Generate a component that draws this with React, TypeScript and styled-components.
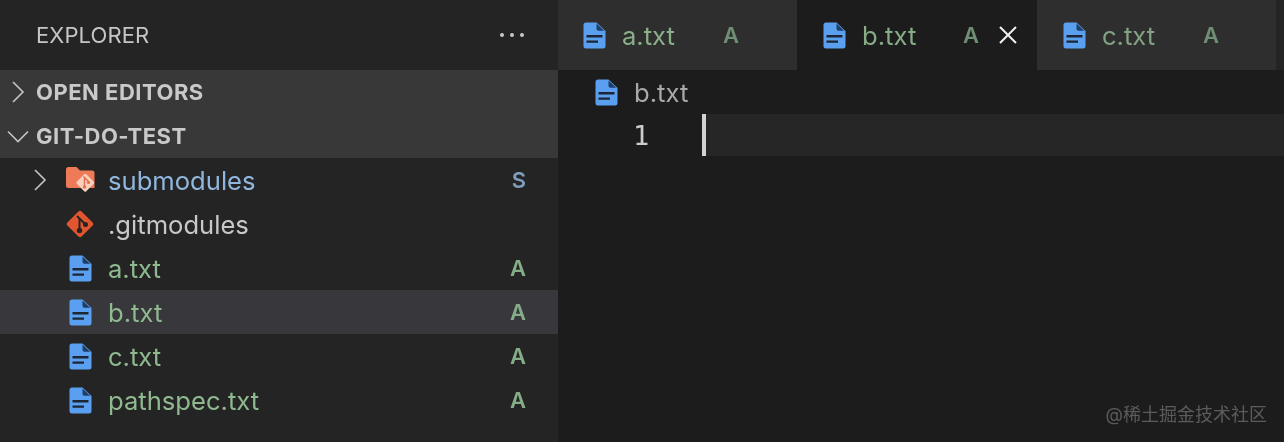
import React from "react";
import styled, { createGlobalStyle } from "styled-components";

const Global = createGlobalStyle`
  html, body { margin: 0; padding: 0; background: #1c1c1c; }
  body { font-family: Inter, "Noto Sans", sans-serif; }
`;

const Frame = styled.div`
  position: relative;
  width: 1284px;
  height: 442px;
  display: flex;
  overflow: hidden;
  will-change: transform;
`;
const Sidebar = styled.aside`
  width: 558px;
  flex: none;
  background: #242424;
  display: flex;
  flex-direction: column;
`;
const SideHeader = styled.header`
  height: 70px;
  flex: none;
  display: flex;
  align-items: center;
  justify-content: space-between;
  padding: 0 34px 0 36px;
  color: #c6c6c6;
  font-size: 22px;
  letter-spacing: 0.1px;
`;
const Dots = styled.div`
  display: flex;
  gap: 6px;
  & > i { width: 4px; height: 4px; border-radius: 50%; background: #c8c8c8; display: block; }
`;
const Section = styled.div`
  height: 44px;
  flex: none;
  display: flex;
  align-items: center;
  background: #383838;
  color: #c9c9c9;
  font-size: 22px;
  font-weight: 700;
  letter-spacing: 0.5px;
`;
const ChevronSlot = styled.span`
  width: 36px;
  flex: none;
  display: flex;
  justify-content: center;
`;
const Row = styled.div<{ $active?: boolean }>`
  height: 44px;
  flex: none;
  display: flex;
  align-items: center;
  padding-right: 32px;
  background: ${(p) => (p.$active ? "#38383c" : "transparent")};
`;
const RowIndent = styled.span`
  width: 38px;
  flex: none;
  margin-left: 28px;
  display: flex;
  justify-content: flex-start;
`;
const IconSlot = styled.span<{ $inset?: number }>`
  width: ${(p) => 42 - (p.$inset ?? 3)}px;
  margin-left: ${(p) => p.$inset ?? 3}px;
  flex: none;
  display: flex;
  justify-content: flex-start;
  align-items: center;
`;
const RowName = styled.span<{ $color: string }>`
  flex: 1;
  font-size: 25.6px;
  line-height: 46px;
  height: 44px;
  color: ${(p) => p.$color};
`;
const Badge = styled.span<{ $color: string }>`
  font-size: 22px;
  font-weight: 600;
  color: ${(p) => p.$color};
`;
const Main = styled.main`
  flex: 1;
  display: flex;
  flex-direction: column;
  background: #1c1c1c;
`;
const TabBar = styled.div`
  height: 70px;
  flex: none;
  display: flex;
  background: #242424;
`;
const Tab = styled.div<{ $active?: boolean; $width: number; $inset: number }>`
  width: ${(p) => p.$width}px;
  flex: none;
  display: flex;
  align-items: center;
  padding-left: ${(p) => p.$inset}px;
  box-sizing: border-box;
  background: ${(p) => (p.$active ? "#1c1c1c" : "#2e2e2e")};
`;
const TabIcon = styled.span`
  width: 39px;
  flex: none;
  display: flex;
  align-items: center;
`;
const TabName = styled.span<{ $color: string }>`
  width: 101px;
  flex: none;
  font-size: 25.6px;
  line-height: 72px;
  height: 70px;
  color: ${(p) => p.$color};
`;
const TabBadge = styled.span<{ $color: string }>`
  font-size: 22px;
  font-weight: 600;
  color: ${(p) => p.$color};
`;
const CloseSlot = styled.span`
  margin-left: 19px;
  display: flex;
`;
const Crumbs = styled.div`
  height: 44px;
  flex: none;
  display: flex;
  align-items: center;
  padding-left: 37px;
  color: #a9a9a9;
  font-size: 25.6px;
`;
const CrumbIcon = styled.span`
  width: 39px;
  flex: none;
  display: flex;
`;
const CodeLine = styled.div`
  height: 42px;
  flex: none;
  display: flex;
  align-items: center;
`;
const LineNo = styled.div`
  width: 144px;
  flex: none;
  box-sizing: border-box;
  padding-left: 75px;
  color: #cccccc;
  font-size: 27px;
  font-family: "DejaVu Sans Mono", monospace;
`;
const Current = styled.div`
  flex: 1;
  align-self: stretch;
  background: #262626;
`;
const Caret = styled.div`
  width: 4px;
  flex: none;
  align-self: stretch;
  background: #d2d2d2;
`;
const Watermark = styled.div`
  position: absolute;
  right: 17px;
  bottom: 16px;
  font-size: 18px;
  color: #5c5c5c;
  font-family: Inter, "Noto Sans CJK SC", sans-serif;
`;

const FileIcon = () => (
  <svg width="23" height="27" viewBox="0 0 23 27">
    <path d="M3 0.500h10.500L22.500 9v15a2.500 2.500 0 0 1-2.500 2.500H3A2.500 2.500 0 0 1 .5 24V3A2.500 2.500 0 0 1 3 .5z" fill="#5a9ff0" />
    <path d="M13.500 1.500v5.300a2 2 0 0 0 2 2h5.700z" fill="#1f3f66" />
    <path d="M3.500 13h16v2.400h-16zM3.500 18.400h11.500v2.400H3.500z" fill="#1d2733" />
  </svg>
);

const GitDiamond = () => (
  <svg width="28" height="28" viewBox="0 0 28 28">
    <rect x="4" y="4" width="20" height="20" rx="2.500" transform="rotate(45 14 14)" fill="#e2562f" />
    <path d="M11 6L19.500 14.500M13.500 8.500v12" stroke="#242424" strokeWidth="2" fill="none" />
    <circle cx="13.500" cy="20.500" r="2.700" fill="#242424" />
    <circle cx="19.500" cy="14.500" r="2.500" fill="#242424" />
  </svg>
);

const GitFolder = () => (
  <svg width="30" height="28" viewBox="0 0 30 28">
    <path d="M2.500 1h8l3.500 3.500h12A2.500 2.500 0 0 1 28.500 7v15H2.500A2.500 2.500 0 0 1 0 19.500V3.500A2.500 2.500 0 0 1 2.500 1z" fill="#ef7a57" />
    <rect x="12.500" y="10" width="13.500" height="13.500" rx="1.500" transform="rotate(45 19.250 16.750)" fill="#f9cfbf" />
    <path d="M17.500 10.500L23 16M18.500 12.500v8" stroke="#e2704c" strokeWidth="1.500" fill="none" />
    <circle cx="18.500" cy="21" r="1.700" fill="#e2704c" />
    <circle cx="22.500" cy="16.500" r="1.600" fill="#e2704c" />
  </svg>
);

const Chevron = ({ open }: { open?: boolean }) => (
  <svg width="24" height="24" viewBox="0 0 24 24">
    <path d={open ? "M2 7.500l10 10 10-10" : "M7 2l10 10-10 10"} stroke="#c5c5c5" strokeWidth="1.600" fill="none" />
  </svg>
);

const Close = () => (
  <svg width="20" height="20" viewBox="0 0 20 20">
    <path d="M2 2l16 16M18 2L2 18" stroke="#f2f2f2" strokeWidth="2" fill="none" />
  </svg>
);

const GREEN = "#8fb98f";
const BADGE = "#84ad88";

const files = [
  { name: "a.txt", active: false },
  { name: "b.txt", active: true },
  { name: "c.txt", active: false },
  { name: "pathspec.txt", active: false },
];

export default function App() {
  return (
    <Frame>
      <Global />
      <Sidebar>
        <SideHeader>
          EXPLORER
          <Dots><i /><i /><i /></Dots>
        </SideHeader>
        <Section><ChevronSlot><Chevron /></ChevronSlot>OPEN EDITORS</Section>
        <Section><ChevronSlot><Chevron open /></ChevronSlot>GIT-DO-TEST</Section>
        <Row>
          <RowIndent><Chevron /></RowIndent>
          <IconSlot $inset={0}><GitFolder /></IconSlot>
          <RowName $color="#92b7df">submodules</RowName>
          <Badge $color="#7f9dbd">S</Badge>
        </Row>
        <Row>
          <RowIndent />
          <IconSlot $inset={0}><GitDiamond /></IconSlot>
          <RowName $color="#c8c8c8">.gitmodules</RowName>
        </Row>
        {files.map((f) => (
          <Row key={f.name} $active={f.active}>
            <RowIndent />
            <IconSlot><FileIcon /></IconSlot>
            <RowName $color={GREEN}>{f.name}</RowName>
            <Badge $color={BADGE}>A</Badge>
          </Row>
        ))}
      </Sidebar>
      <Main>
        <TabBar>
          <Tab $width={239} $inset={25}>
            <TabIcon><FileIcon /></TabIcon>
            <TabName $color="#8ab08a">a.txt</TabName>
            <TabBadge $color="#6f8f72">A</TabBadge>
          </Tab>
          <Tab $width={240} $inset={26} $active>
            <TabIcon><FileIcon /></TabIcon>
            <TabName $color="#86ac86">b.txt</TabName>
            <TabBadge $color="#6f8f72">A</TabBadge>
            <CloseSlot><Close /></CloseSlot>
          </Tab>
          <Tab $width={239} $inset={26}>
            <TabIcon><FileIcon /></TabIcon>
            <TabName $color="#82a283">c.txt</TabName>
            <TabBadge $color="#6f8f72">A</TabBadge>
          </Tab>
        </TabBar>
        <Crumbs>
          <CrumbIcon><FileIcon /></CrumbIcon>
          b.txt
        </Crumbs>
        <CodeLine>
          <LineNo>1</LineNo>
          <Caret />
          <Current />
        </CodeLine>
      </Main>
      <Watermark>@稀土掘金技术社区</Watermark>
    </Frame>
  );
}
